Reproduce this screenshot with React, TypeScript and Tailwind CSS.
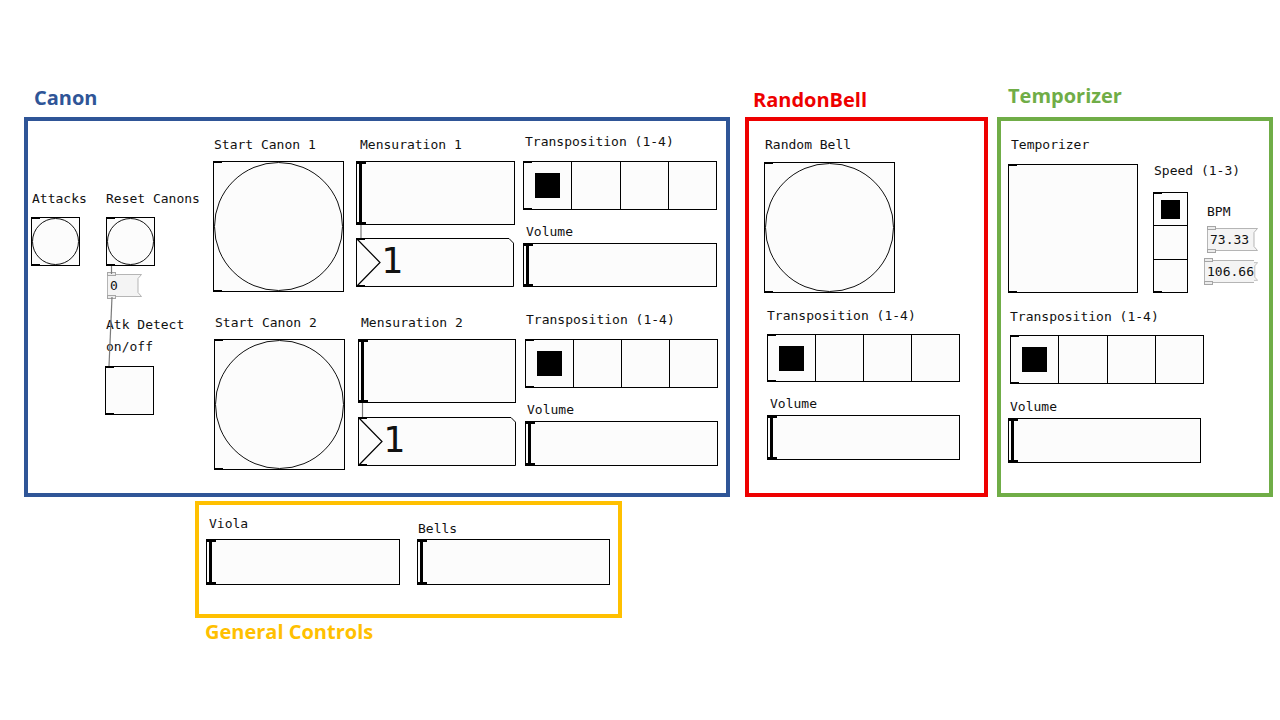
import React from "react";

const mono = "font-['DejaVu_Sans_Mono','Liberation_Mono',monospace]";
const title = "font-['Open_Sans','Noto_Sans',sans-serif] text-[20px] font-bold leading-none";

function Marks({ thick = false }: { thick?: boolean }) {
  return (
    <>
      <div className={`absolute left-0 top-0 bg-black ${thick ? "h-[2px] w-[9px]" : "h-[1px] w-[8px]"}`} />
      <div className={`absolute bottom-0 left-0 bg-black ${thick ? "h-[2px] w-[9px]" : "h-[1px] w-[8px]"}`} />
    </>
  );
}

function Box({
  className = "",
  thick = false,
  children
}: {
  className?: string;
  thick?: boolean;
  children?: React.ReactNode;
}) {
  return (
    <div className={`relative shrink-0 border border-black bg-[#fcfcfc] ${className}`}>
      {children}
      <Marks thick={thick} />
    </div>
  );
}

function Bang({ className }: { className: string }) {
  return (
    <Box className={className}>
      <div className="absolute inset-0 rounded-full border-[1.5px] border-[#111]" />
    </Box>
  );
}

function Slider({ className }: { className: string }) {
  return (
    <Box className={className} thick>
      <div className="absolute bottom-[1px] left-[2px] top-[1px] w-[3px] bg-black" />
    </Box>
  );
}

function Radio({
  className,
  count,
  vertical = false,
  dot
}: {
  className: string;
  count: number;
  vertical?: boolean;
  dot: string;
}) {
  const cells = Array.from({ length: count });
  return (
    <Box className={`${vertical ? "flex flex-col" : "flex"} ${className}`}>
      {cells.map((_, i) => (
        <div
          key={i}
          className={`flex flex-1 items-center justify-center ${
            i > 0 ? (vertical ? "border-t border-black" : "border-l border-black") : ""
          }`}
        >
          {i === 0 ? <div className={`bg-black ${dot}`} /> : null}
        </div>
      ))}
    </Box>
  );
}

function NumberBox({ className }: { className: string }) {
  return (
    <div className={`relative h-[49px] w-[158px] shrink-0 ${className}`}>
      <svg className="absolute inset-0 h-full w-full" viewBox="0 0 158 48" preserveAspectRatio="none">
        <path
          d="M0.5 0.5 H153 L157.5 5 V47.5 H0.5 Z"
          fill="#fcfcfc"
          stroke="#000"
          strokeWidth="1"
          vectorEffect="non-scaling-stroke"
        />
        <path
          d="M0.5 0.5 L24 24 L0.5 47.5"
          fill="none"
          stroke="#000"
          strokeWidth="1.2"
          vectorEffect="non-scaling-stroke"
        />
      </svg>
      <div className="absolute left-0 top-0 h-[2px] w-[9px] bg-black" />
      <div className="absolute bottom-0 left-0 h-[2px] w-[9px] bg-black" />
      <span className={`absolute left-[25px] top-[5px] text-[36px] font-light leading-none text-[#111] ${mono}`}>1</span>
    </div>
  );
}

function Atom({ className, text }: { className: string; text: string }) {
  return (
    <div className={`relative flex h-[23px] shrink-0 ${className}`}>
      <div
        className={`flex flex-1 items-center border-y border-l border-[#b5b5b5] bg-[#f4f4f4] pl-[2px] text-[13px] leading-none text-[#111] ${mono}`}
      >
        {text}
      </div>
      <svg width="5" height="23" viewBox="0 0 5 23" className="block">
        <path d="M0 0 H5 L1 4.5 V18.5 L5 23 H0 Z" fill="#f4f4f4" />
        <path d="M0 0.5 H4.5 L1 4.5 V18.5 L4.5 22.5 H0" fill="none" stroke="#b5b5b5" strokeWidth="1" />
      </svg>
      <div className="absolute -top-[2px] left-0 h-[4px] w-[9px] border border-[#a5a5a5] bg-[#ececec]" />
      <div className="absolute -bottom-[2px] left-0 h-[4px] w-[9px] border border-[#a5a5a5] bg-[#ececec]" />
    </div>
  );
}

function Label({ className = "", children }: { className?: string; children: React.ReactNode }) {
  return (
    <span className={`block h-[13px] whitespace-pre text-[13px] leading-none text-[#111] ${mono} ${className}`}>
      {children}
    </span>
  );
}

// a group of pd objects sitting at one spot of the patch canvas
function Group({ className, children }: { className: string; children: React.ReactNode }) {
  return <div className={`absolute flex flex-col items-start ${className}`}>{children}</div>;
}

function Canon() {
  return (
    <div className="relative h-[380px] w-[706px] border-4 border-[#2f5597]">
      <Group className="left-[3px] top-[71px] gap-[12px]">
        <Label className="ml-[1px]">Attacks</Label>
        <Bang className="h-[49px] w-[49px]" />
      </Group>
      <Group className="left-[77px] top-[71px]">
        <Label className="ml-[1px]">Reset Canons</Label>
        <Bang className="ml-[1px] mt-[12px] h-[49px] w-[49px]" />
        <Atom className="ml-[2px] mt-[8px] w-[35px]" text="0" />
        <Label className="ml-[1px] mt-[21px]">Atk Detect</Label>
        <Label className="ml-[1px] mt-[9px]">on/off</Label>
        <Box className="mt-[13px] h-[49px] w-[49px]" />
      </Group>

      <Group className="left-[185px] top-[17px] gap-[10px]">
        <Label className="ml-[1px]">Start Canon 1</Label>
        <Bang className="h-[131px] w-[131px]" />
      </Group>
      <Group className="left-[328px] top-[17px]">
        <Label className="ml-[4px]">Mensuration 1</Label>
        <Slider className="mt-[10px] h-[64px] w-[159px]" />
        <NumberBox className="mt-[13px]" />
      </Group>
      <Group className="left-[495px] top-[14px]">
        <Label className="ml-[2px]">Transposition (1-4)</Label>
        <Radio className="mt-[13px] h-[49px] w-[194px]" count={4} dot="h-[25px] w-[25px]" />
        <Label className="ml-[3px] mt-[15px]">Volume</Label>
        <Slider className="mt-[5px] h-[44px] w-[194px]" />
      </Group>

      <Group className="left-[186px] top-[195px] gap-[10px]">
        <Label className="ml-[1px]">Start Canon 2</Label>
        <Bang className="h-[131px] w-[131px]" />
      </Group>
      <Group className="left-[330px] top-[195px]">
        <Label className="ml-[3px]">Mensuration 2</Label>
        <Slider className="mt-[10px] h-[64px] w-[158px]" />
        <NumberBox className="mt-[14px] h-[48px]" />
      </Group>
      <Group className="left-[497px] top-[192px]">
        <Label className="ml-[1px]">Transposition (1-4)</Label>
        <Radio className="mt-[13px] h-[49px] w-[193px]" count={4} dot="h-[25px] w-[25px]" />
        <Label className="ml-[2px] mt-[15px]">Volume</Label>
        <Slider className="mt-[5px] h-[45px] w-[193px]" />
      </Group>
    </div>
  );
}

function RandonBell() {
  return (
    <div className="relative h-[380px] w-[243px] border-4 border-[#ee0000]">
      <Group className="left-[15px] top-[17px]">
        <Label className="ml-[1px]">Random Bell</Label>
        <Bang className="mt-[11px] h-[131px] w-[131px]" />
        <Label className="ml-[3px] mt-[16px]">Transposition (1-4)</Label>
        <Radio className="ml-[3px] mt-[12px] h-[48px] w-[193px]" count={4} dot="h-[25px] w-[25px]" />
        <Label className="ml-[6px] mt-[15px]">Volume</Label>
        <Slider className="ml-[3px] mt-[5px] h-[45px] w-[193px]" />
      </Group>
    </div>
  );
}

function Temporizer() {
  return (
    <div className="relative h-[380px] w-[276px] border-4 border-[#70ad47]">
      <Group className="left-[7px] top-[17px]">
        <Label className="ml-[3px]">Temporizer</Label>
        <Box className="mt-[13px] h-[129px] w-[130px]" />
        <Label className="ml-[2px] mt-[17px]">Transposition (1-4)</Label>
        <Radio className="ml-[2px] mt-[12px] h-[49px] w-[194px]" count={4} dot="h-[25px] w-[25px]" />
        <Label className="ml-[2px] mt-[16px]">Volume</Label>
        <Slider className="mt-[5px] h-[45px] w-[193px]" />
      </Group>
      <Group className="left-[152px] top-[43px] gap-[15px]">
        <Label className="ml-[1px]">Speed (1-3)</Label>
        <Radio className="h-[101px] w-[35px]" count={3} vertical dot="h-[19px] w-[19px]" />
      </Group>
      <Group className="left-[203px] top-[84px]">
        <Label className="ml-[3px]">BPM</Label>
        <Atom className="ml-[3px] mt-[10px] w-[51px]" text="73.33" />
        <Atom className="mt-[9px] w-[54px]" text="106.66" />
      </Group>
    </div>
  );
}

function GeneralControls() {
  return (
    <div className="flex h-[117px] w-[427px] items-end gap-[17px] border-4 border-[#ffc000] pb-[29px] pl-[7px]">
      <div className="flex flex-col items-start gap-[9px]">
        <Label className="ml-[3px]">Viola</Label>
        <Slider className="h-[46px] w-[194px]" />
      </div>
      <div className="flex flex-col items-start gap-[4px]">
        <Label className="ml-[1px]">Bells</Label>
        <Slider className="h-[46px] w-[193px]" />
      </div>
    </div>
  );
}

export default function App() {
  return (
    <div className="relative h-[720px] w-[1280px] overflow-hidden bg-white">
      <div className="absolute left-[24px] top-[86px] flex items-end">
        <div className="flex flex-col items-start">
          <span className={`mb-[9px] ml-[10px] text-[#2f5597] ${title}`}>Canon</span>
          <Canon />
        </div>
        <div className="ml-[15px] flex flex-col items-start">
          <span className={`mb-[7px] ml-[8px] text-[#ee0000] ${title}`}>RandonBell</span>
          <RandonBell />
        </div>
        <div className="ml-[9px] flex flex-col items-start">
          <span className={`mb-[11px] ml-[11px] text-[#70ad47] ${title}`}>Temporizer</span>
          <Temporizer />
        </div>
      </div>

      <div className="absolute left-[195px] top-[501px] flex flex-col items-start">
        <GeneralControls />
        <span className={`ml-[10px] mt-[4px] text-[#ffc000] ${title}`}>General Controls</span>
      </div>

      {/* patch cords */}
      <svg className="pointer-events-none absolute inset-0" width="1280" height="720">
        <g stroke="#7a7a7a" strokeWidth="1.2" fill="none">
          <line x1="111.5" y1="266" x2="111.5" y2="274" />
          <line x1="112" y1="297" x2="109" y2="366" />
          <line x1="361" y1="225" x2="361" y2="238" />
          <line x1="362.5" y1="403" x2="362.5" y2="417" />
        </g>
      </svg>
    </div>
  );
}
